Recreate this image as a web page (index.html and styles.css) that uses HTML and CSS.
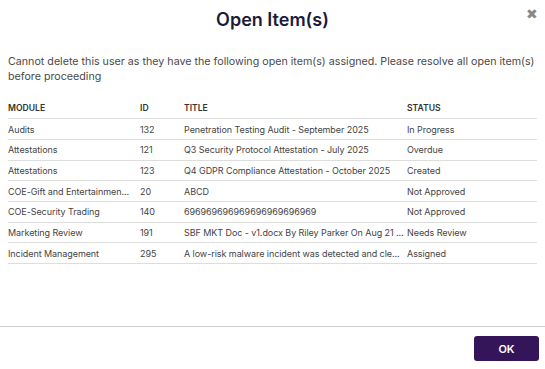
FILE: index.html
```html
<!DOCTYPE html>
<html>
<head>
<meta charset="utf-8">
<link rel="stylesheet" href="styles.css">
</head>
<body>
<div class="modal">
  <div class="modal-header">
    <h1 class="modal-title">Open Item(s)</h1>
    <span class="close">&#10006;</span>
  </div>
  <div class="modal-body">
    <p class="message">Cannot delete this user as they have the following open item(s) assigned. Please resolve all open item(s) before proceeding</p>
    <table class="items">
      <thead>
        <tr><th class="c-module">MODULE</th><th class="c-id">ID</th><th class="c-title">TITLE</th><th class="c-status">STATUS</th></tr>
      </thead>
      <tbody>
        <tr><td>Audits</td><td>132</td><td>Penetration Testing Audit - September 2025</td><td>In Progress</td></tr>
        <tr><td>Attestations</td><td>121</td><td>Q3 Security Protocol Attestation - July 2025</td><td>Overdue</td></tr>
        <tr><td>Attestations</td><td>123</td><td>Q4 GDPR Compliance Attestation - October 2025</td><td>Created</td></tr>
        <tr><td>COE-Gift and Entertainmen...</td><td>20</td><td>ABCD</td><td>Not Approved</td></tr>
        <tr><td>COE-Security Trading</td><td>140</td><td>696969696969696969696969</td><td>Not Approved</td></tr>
        <tr><td>Marketing Review</td><td>191</td><td>SBF MKT Doc - v1.docx By Riley Parker On Aug 21 ...</td><td>Needs Review</td></tr>
        <tr><td>Incident Management</td><td>295</td><td>A low-risk malware incident was detected and cle...</td><td>Assigned</td></tr>
      </tbody>
    </table>
  </div>
  <div class="modal-footer">
    <button class="btn-ok">OK</button>
  </div>
</div>
</body>
</html>
```

FILE: styles.css
```css
* { box-sizing: border-box; }
html, body { margin: 0; padding: 0; background: #fff; }
body { font-family: Inter, "Noto Sans", sans-serif; color: #444; }
.modal { width: 545px; height: 369px; display: flex; flex-direction: column; background: #fff; }
.modal-header { position: relative; height: 40px; display: flex; align-items: center; justify-content: center; }
.modal-title { margin: 0; font-size: 18px; font-weight: 600; color: #1b1b3a; line-height: 22px; }
.close { position: absolute; right: 7px; top: 6px; font-size: 14px; color: #888; line-height: 16px; }
.modal-body { flex: 1; padding: 14px 8px 0 8px; }
.message { margin: 0; font-size: 10.7px; line-height: 15px; color: #4a4a4a; }
.items { margin-top: 14px; width: 529px; border-collapse: collapse; table-layout: fixed; font-size: 9px; }
.items th, .items td { text-align: left; padding: 0; height: 20.7px; border-bottom: 1px solid #ddd; white-space: nowrap; }
.items th { font-weight: 600; color: #333; font-size: 8.6px; }
.c-module { width: 132px; }
.c-id { width: 44px; }
.c-title { width: 223px; }
.items td { color: #444; letter-spacing: -0.07px; }
.modal-footer { height: 43px; border-top: 1px solid #ccc; display: flex; justify-content: flex-end; align-items: flex-start; padding: 9px 6px 0 0; }
.btn-ok { width: 65px; height: 25px; border: none; border-radius: 3px; background: #35155a; color: #fff; font-family: Inter, sans-serif; font-size: 11px; font-weight: 600; }
```
